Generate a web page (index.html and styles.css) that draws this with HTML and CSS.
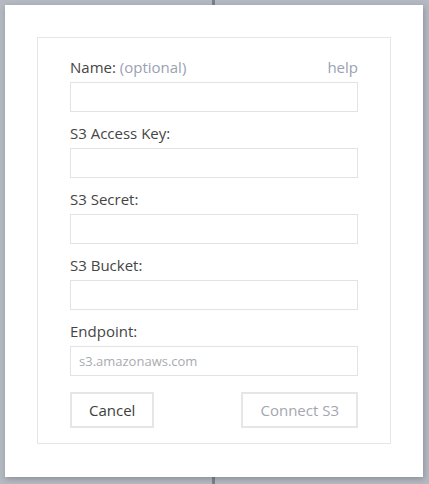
FILE: index.html
```html
<!DOCTYPE html>
<html lang="en">
<head>
<meta charset="utf-8">
<title>Connect S3</title>
<link rel="stylesheet" href="styles.css">
</head>
<body>
<div class="divider"></div>
<div class="panel">
  <form class="card">
    <div class="field">
      <div class="label-row">
        <label class="label">Name: <span class="muted">(optional)</span></label>
        <a class="help">help</a>
      </div>
      <input class="input" type="text">
    </div>
    <div class="field">
      <label class="label">S3 Access Key:</label>
      <input class="input" type="text">
    </div>
    <div class="field">
      <label class="label">S3 Secret:</label>
      <input class="input" type="text">
    </div>
    <div class="field">
      <label class="label">S3 Bucket:</label>
      <input class="input" type="text">
    </div>
    <div class="field">
      <label class="label">Endpoint:</label>
      <input class="input" type="text" placeholder="s3.amazonaws.com">
    </div>
    <div class="actions">
      <button class="btn" type="button">Cancel</button>
      <button class="btn btn-disabled" type="button">Connect S3</button>
    </div>
  </form>
</div>
</body>
</html>
```

FILE: styles.css
```css
* {
  box-sizing: border-box;
}

html, body {
  margin: 0;
  padding: 0;
}

body {
  background: #b5b9c1;
  font-family: "Open Sans", "Noto Sans", sans-serif;
  position: relative;
  height: 484px;
  overflow: hidden;
  padding: 5px;
}

.divider {
  position: absolute;
  left: 212px;
  top: 0;
  width: 3px;
  height: 100%;
  background: #7d8189;
}

.panel {
  position: relative;
  width: 418px;
  height: 472px;
  background: #ffffff;
  padding: 32px;
  box-shadow: 1px 2px 6px rgba(60, 64, 72, 0.35);
}

.card {
  border: 1px solid #e6e6e8;
  height: 407px;
  padding: 19px 32px 15px;
  display: flex;
  flex-direction: column;
  gap: 11px;
}

.field {
  display: flex;
  flex-direction: column;
  gap: 5px;
}

.label-row {
  display: flex;
  justify-content: space-between;
  align-items: center;
}

.label {
  font-size: 15px;
  line-height: 20px;
  color: #454545;
}

.muted {
  color: #9aa1b2;
}

.help {
  font-size: 15px;
  line-height: 20px;
  color: #9aa1b2;
}

.input {
  height: 30px;
  width: 100%;
  border: 1px solid #e3e3e6;
  background: #fff;
  padding: 0 8px;
  font-family: "Open Sans", "Noto Sans", sans-serif;
  font-size: 13px;
  color: #444;
  outline: none;
}

.input::placeholder {
  color: #a9abaf;
}

.actions {
  display: flex;
  justify-content: space-between;
  margin-top: 5px;
}

.btn {
  height: 36px;
  padding: 0 17px;
  background: #fff;
  border: 2px solid #e6e6e9;
  font-family: "Open Sans", "Noto Sans", sans-serif;
  font-size: 15px;
  color: #3e3e3e;
}

.btn-disabled {
  color: #a3a7b0;
}
```
